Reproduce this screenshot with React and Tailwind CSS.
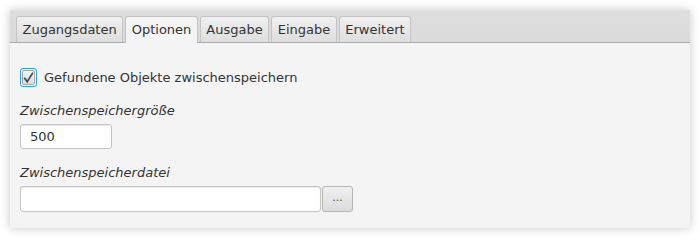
import React from 'react';

const tabs = ['Zugangsdaten', 'Optionen', 'Ausgabe', 'Eingabe', 'Erweitert'];

const App = () => {
  const active = 'Optionen';

  return (
    <div className="w-[700px] h-[237px] bg-white pt-[10px] pl-[10px] text-[13px] text-[#333]" style={{ fontFamily: '"DejaVu Sans", sans-serif' }}>
      <div className="w-[680px] h-[218px] bg-[#f4f4f4] shadow-[0_0_9px_rgba(0,0,0,0.22)] flex flex-col">
        {/* Tab header */}
        <div className="h-[33px] bg-gradient-to-b from-[#dedede] to-[#dadada] border-b border-[#aaaaaa] flex items-end gap-[2px] pl-[6px]">
          {tabs.map((t) => (
            <div
              key={t}
              className={
                t === active
                  ? 'h-[27px] px-[5.5px] flex items-center rounded-t-[3px] border border-b-0 border-[#c2c2c2] bg-[#f4f4f4] -mb-px text-[#333]'
                  : 'h-[26px] px-[5.5px] flex items-center rounded-t-[3px] border border-b-0 border-[#c4c4c4] bg-gradient-to-b from-[#f0f0f0] to-[#dedede] text-[#333]'
              }
            >
              {t}
            </div>
          ))}
        </div>

        <div className="flex flex-col px-[10px] pt-[25px]">
          {/* Checkbox */}
          <div className="flex items-center gap-[7px] h-[19px]">
            <div className="w-[17px] h-[19px] rounded-[3px] border-[1.5px] border-[#2fa4dc] p-px">
              <div className="w-full h-full rounded-[2px] border border-[#a9a9a9] bg-gradient-to-b from-[#f2f2f2] to-[#dcdcdc] flex items-center justify-center">
                <svg width="12" height="13" viewBox="0 0 12 13">
                  <path d="M1.3 6.8 L4.6 11 L10.8 1.2" fill="none" stroke="#4a4a4a" strokeWidth="1.9" strokeLinejoin="miter" />
                </svg>
              </div>
            </div>
            <span>Gefundene Objekte zwischenspeichern</span>
          </div>

          <div className="italic leading-[16px] mt-[16px]">Zwischenspeichergröße</div>
          <div className="mt-[5px] w-[92px] h-[25px] rounded-[3px] border border-[#c4c4c4] bg-white shadow-[inset_0_1px_1px_rgba(0,0,0,0.08)] flex items-center pl-[9px]">
            500
          </div>

          <div className="italic leading-[16px] mt-[16px]">Zwischenspeicherdatei</div>
          <div className="mt-[5px] flex gap-px">
            <div className="w-[301px] h-[26px] rounded-[3px] border border-[#c4c4c4] bg-white shadow-[inset_0_1px_1px_rgba(0,0,0,0.08)]" />
            <div className="w-[31px] h-[26px] rounded-[3px] border border-[#b5b5b5] bg-gradient-to-b from-[#f0f0f0] to-[#dcdcdc] flex items-center justify-center text-[11px] text-[#444] pb-[2px]">
              ...
            </div>
          </div>
        </div>
      </div>
    </div>
  );
};

export default App;
